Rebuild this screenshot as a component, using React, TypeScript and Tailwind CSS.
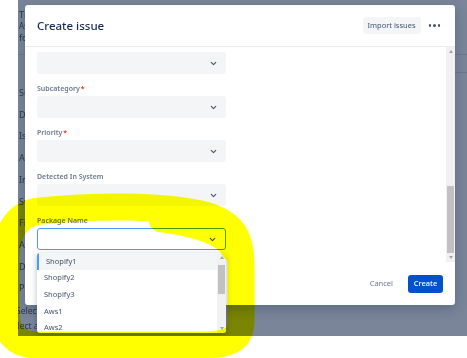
import { ChevronDown } from "lucide-react";

const fields = [
  { label: "Incident State", required: false, focused: false },
  { label: "Subcategory", required: true, focused: false },
  { label: "Priority", required: true, focused: false },
  { label: "Detected In System", required: false, focused: false },
  { label: "Package Name", required: false, focused: true },
];

const options = ["Shopify1", "Shopify2", "Shopify3", "Aws1", "Aws2"];

const pageRows = ["Summary", "Description", "Issue type", "Assignee", "Incident", "Status", "Fix version", "Affects", "Due date", "Priority"];

const Scrollbar = ({ thumbClass }: { thumbClass: string }) => (
  <div className="flex w-[9px] flex-col bg-[#f1f1f1]">
    <div className="flex h-[9px] items-center justify-center">
      <div className="h-0 w-0 border-x-[2.5px] border-b-[3px] border-x-transparent border-b-[#a3a3a3]" />
    </div>
    <div className="flex-1">
      <div className={`mx-[1px] bg-[#c1c1c1] ${thumbClass}`} />
    </div>
    <div className="flex h-[9px] items-center justify-center">
      <div className="h-0 w-0 border-x-[2.5px] border-t-[3px] border-x-transparent border-t-[#a3a3a3]" />
    </div>
  </div>
);

export default function App() {
  return (
    <div
      className="relative h-[358px] w-[467px] overflow-hidden bg-white"
      style={{ fontFamily: '"Noto Sans", "Open Sans", sans-serif' }}
    >
      {/* page behind the dialog, dimmed by the blanket */}
      <div className="relative ml-[18px] h-[336px] w-[449px] overflow-hidden bg-[#7a8599] text-[#2c364a]">
        <div className="flex w-[7px] flex-col overflow-hidden whitespace-nowrap pl-[1px] pt-[9px] text-[9px] leading-[11px]">
          <span>Tiers</span>
          <span className="text-[8px]">Assigned</span>
          <span className="mt-[1px]">found</span>
        </div>
        <div className="mt-[11px] border-t border-[#6c778c]" />
        <div className="ml-[437px] mt-[17px] border-t border-[#6c778c]" />
        <div className="mt-[9px] flex w-[7px] flex-col overflow-hidden whitespace-nowrap pl-[1px] text-[9px] leading-[21.7px]">
          {pageRows.map((row) => (
            <span key={row}>{row}</span>
          ))}
        </div>
        <div className="mt-[4px] flex w-[19px] flex-col overflow-hidden whitespace-nowrap text-[8.5px] leading-[15px]">
          <span className="-ml-[2px]">Select fields</span>
          <span className="-ml-[10px]">Select a file</span>
        </div>

        {/* dialog */}
        <div className="absolute left-[7px] top-[5px] flex h-[300px] w-[430px] flex-col rounded-[3px] bg-white shadow-[0_4px_12px_rgba(9,30,66,0.25)]">
          <div className="flex h-[42px] items-center justify-between border-b border-[#ebecf0] pl-[12px] pr-[15px]">
            <span className="text-[11.5px] font-medium text-[#172b4d]">Create issue</span>
            <div className="flex items-center gap-[8px]">
              <button className="flex h-[17px] w-[58px] items-center justify-center rounded-[3px] bg-[#f4f5f7] text-[7.5px] text-[#42526e]">
                Import issues
              </button>
              <div className="flex gap-[2px]">
                <span className="h-[2.5px] w-[2.5px] rounded-full bg-[#42526e]" />
                <span className="h-[2.5px] w-[2.5px] rounded-full bg-[#42526e]" />
                <span className="h-[2.5px] w-[2.5px] rounded-full bg-[#42526e]" />
              </div>
            </div>
          </div>

          <div className="flex h-[215px]">
            <div className="flex-1 overflow-hidden pl-[12px]">
              <div className="-mt-[8px] flex flex-col">
                {fields.map((f) => (
                  <div key={f.label} className="flex h-[44px] flex-col">
                    <div className="h-[12px] text-[7px] font-semibold leading-[12px] text-[#6b778c]">
                      {f.label}
                      {f.required && <span className="ml-[1px] text-[#de350b]">*</span>}
                    </div>
                    <div
                      className={`mt-[1px] flex h-[22px] w-[189px] items-center justify-end rounded-[3px] pr-[8px] ${
                        f.focused ? "border-[1.5px] border-[#4c9aff] bg-white" : "bg-[#f4f5f7]"
                      }`}
                    >
                      <ChevronDown size={9} strokeWidth={3} className="text-[#42526e]" />
                    </div>
                  </div>
                ))}
              </div>
            </div>
            <Scrollbar thumbClass="mt-[130px] h-[67px]" />
          </div>

          <div className="flex flex-1 items-center justify-end gap-[15px] pr-[12px]">
            <span className="text-[7.5px] text-[#6b778c]">Cancel</span>
            <button className="flex h-[18px] w-[35px] items-center justify-center rounded-[3px] bg-[#0052cc] text-[7.5px] font-medium text-white">
              Create
            </button>
          </div>

          {/* open select menu */}
          <div className="absolute left-[12px] top-[248px] flex h-[80px] w-[189px] overflow-hidden rounded-[3px] bg-white shadow-[0_2px_6px_rgba(9,30,66,0.3)]">
            <div className="flex flex-1 flex-col">
              {options.map((o, i) => (
                <div
                  key={o}
                  className={`flex h-[16.7px] shrink-0 items-center pl-[7px] text-[7.5px] text-[#42526e] ${
                    i === 0 ? "border-l-2 border-[#4c9aff] bg-[#f4f5f7] pl-[5px]" : ""
                  }`}
                >
                  {o}
                </div>
              ))}
            </div>
            <Scrollbar thumbClass="mt-[3px] h-[29px]" />
          </div>
        </div>
      </div>

      {/* highlighter scribble */}
      <svg
        className="pointer-events-none absolute left-0 top-0 mix-blend-multiply"
        width="467"
        height="358"
        viewBox="0 0 467 358"
      >
        <path
          d="M 40 211 C 90 206, 160 204, 205 215 C 235 224, 241 240, 241 265 L 241 320 C 241 340, 230 345, 200 345 L 40 345 C 15 345, 6 335, 6 310 L 6 260 C 6 230, 18 213, 40 211 Z"
          fill="none"
          stroke="#ffff00"
          strokeWidth="27"
          strokeLinejoin="round"
        />
        <path d="M 160 221 C 200 226, 225 236, 232 250" fill="none" stroke="#ffff00" strokeWidth="22" strokeLinecap="round" />
      </svg>
    </div>
  );
}
